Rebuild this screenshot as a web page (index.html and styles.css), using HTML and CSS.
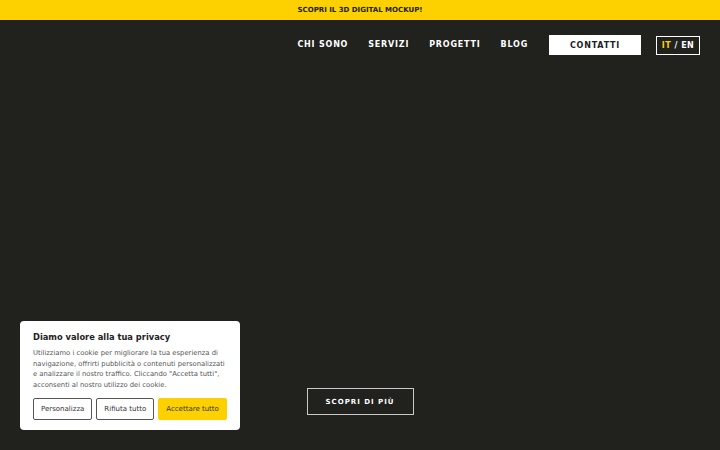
FILE: index.html
```html
<!DOCTYPE html>
<html lang="it">
<head>
  <meta charset="UTF-8">
  <meta name="viewport" content="width=device-width, initial-scale=1.0">
  <title>Studio</title>
  <link rel="stylesheet" href="styles.css">
</head>
<body>

  <div class="topBanner">SCOPRI IL 3D DIGITAL MOCKUP!</div>

  <header class="siteHeader">
    <nav class="mainNav">
      <a href="#" class="navLink">CHI SONO</a>
      <a href="#" class="navLink">SERVIZI</a>
      <a href="#" class="navLink">PROGETTI</a>
      <a href="#" class="navLink">BLOG</a>
      <a href="#" class="contactBtn">CONTATTI</a>
      <div class="langSwitch"><span class="langActive">IT</span> / EN</div>
    </nav>
  </header>

  <main class="hero">
    <a href="#" class="moreBtn">SCOPRI DI PIÙ</a>
  </main>

  <!-- cookie banner -->
  <div class="cookieBox">
    <h3 class="cookieTitle">Diamo valore alla tua privacy</h3>
    <p class="cookieText">Utilizziamo i cookie per migliorare la tua esperienza di navigazione, offrirti pubblicità o contenuti personalizzati e analizzare il nostro traffico. Cliccando "Accetta tutti", acconsenti al nostro utilizzo dei cookie.</p>
    <div class="cookieBtns">
      <button class="cookieBtn">Personalizza</button>
      <button class="cookieBtn">Rifiuta tutto</button>
      <button class="cookieBtn acceptBtn">Accettare tutto</button>
    </div>
  </div>

</body>
</html>
```

FILE: styles.css
```css
body {
  margin: 0;
  font-family: "DejaVu Sans", Inter, sans-serif;
  background-color: #21211e;
  height: 100vh;
  overflow: hidden;
  display: flex;
  flex-direction: column;
}

.topBanner {
  height: 20px;
  background-color: #fdd000;
  color: #21211e;
  font-size: 7px;
  font-weight: bold;
  display: flex;
  justify-content: center;
  align-items: center;
}

.siteHeader {
  display: flex;
  justify-content: flex-end;
  padding: 15px 20px 0 0;
}

.mainNav {
  display: flex;
  align-items: center;
}

.navLink {
  color: #fff;
  text-decoration: none;
  font-size: 8px;
  font-weight: bold;
  letter-spacing: 0.8px;
  margin-left: 20px;
  padding-bottom: 2px;
}

.navLink:first-child {
  margin-left: 0;
}

.contactBtn {
  background-color: #fff;
  color: #21211e;
  text-decoration: none;
  font-size: 8px;
  font-weight: bold;
  letter-spacing: 0.8px;
  width: 92px;
  height: 20px;
  display: flex;
  justify-content: center;
  align-items: center;
  margin-left: 21px;
}

.langSwitch {
  border: 1.5px solid #fff;
  color: #fff;
  font-size: 8px;
  font-weight: bold;
  letter-spacing: 0.5px;
  height: 17px;
  width: 42px;
  display: flex;
  justify-content: center;
  align-items: center;
  margin-left: 15px;
  white-space: pre;
}

.langActive {
  color: #fdd000;
}

.hero {
  flex: 1;
  display: flex;
  justify-content: center;
  align-items: flex-end;
  padding-bottom: 35px;
}

.moreBtn {
  border: 1.5px solid #c9c9c6;
  color: #fff;
  text-decoration: none;
  font-size: 7px;
  font-weight: bold;
  letter-spacing: 1px;
  width: 105px;
  height: 25px;
  display: flex;
  justify-content: center;
  align-items: center;
}

.cookieBox {
  position: fixed;
  left: 20px;
  bottom: 20px;
  width: 220px;
  box-sizing: border-box;
  background-color: #fff;
  border-radius: 4px;
  padding: 11px 13px 10px 13px;
}

.cookieTitle {
  margin: 0 0 6px 0;
  font-size: 8.3px;
  font-weight: bold;
  color: #222;
}

.cookieText {
  margin: 0 0 8px 0;
  font-size: 6.8px;
  line-height: 10.5px;
  color: #555;
}

.cookieBtns {
  display: flex;
  gap: 4px;
}

.cookieBtn {
  font-family: inherit;
  font-size: 7px;
  color: #333;
  background: #fff;
  border: 1.5px solid #555;
  border-radius: 2px;
  height: 22px;
  padding: 0 7px;
  white-space: nowrap;
  flex-shrink: 0;
}

.acceptBtn {
  background-color: #fdd000;
  border-color: #fdd000;
}
```
